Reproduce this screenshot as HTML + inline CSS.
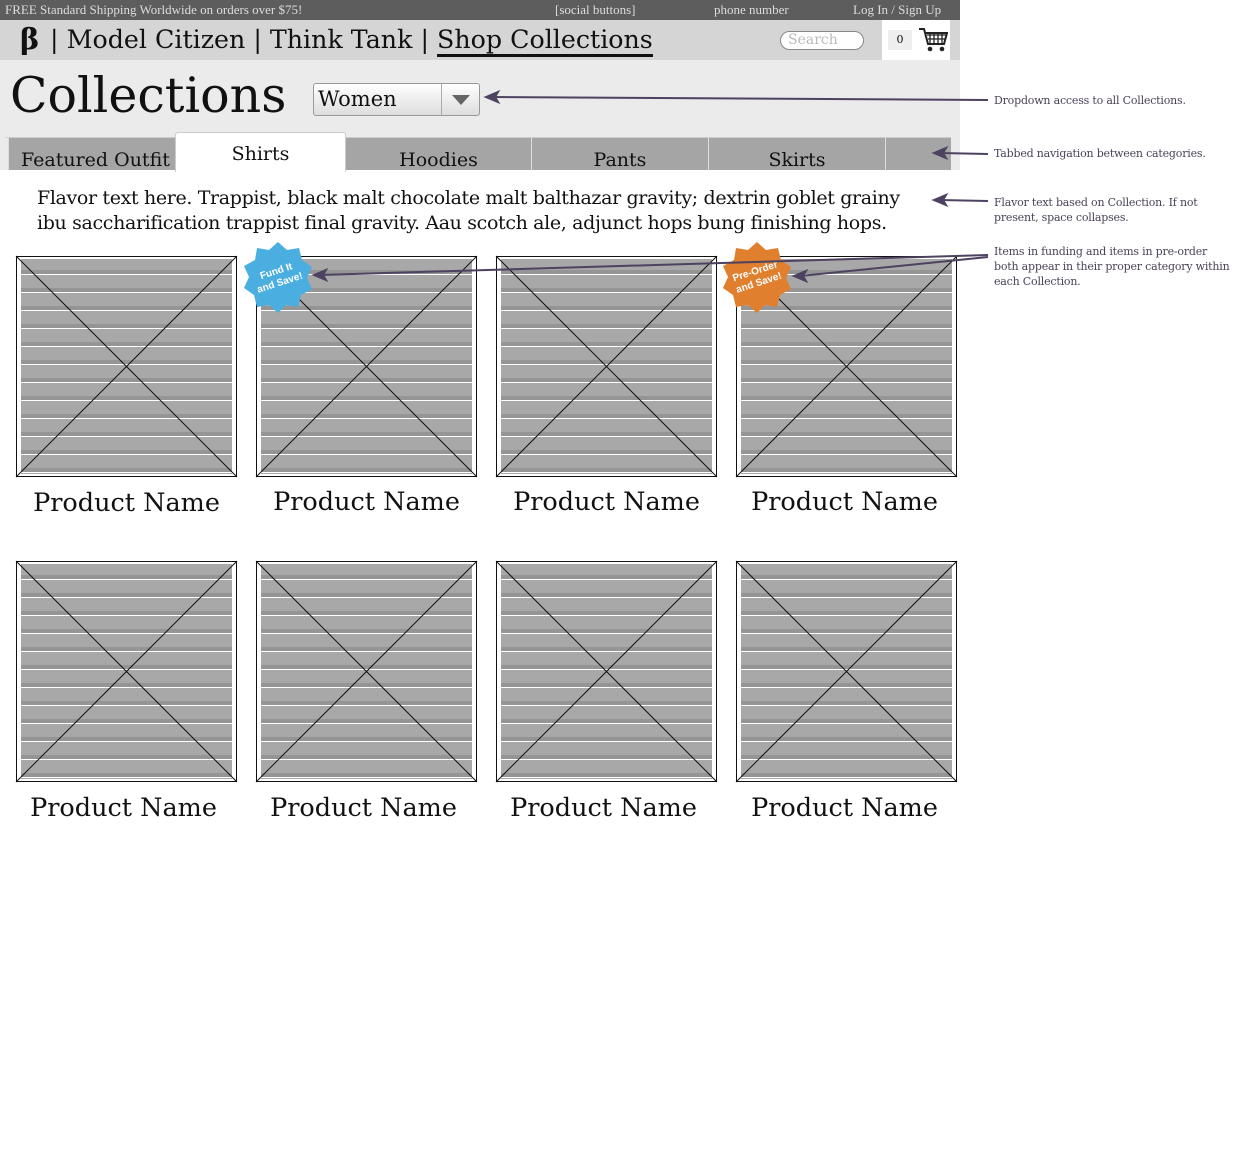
<!DOCTYPE html>
<html><head><style>
*{margin:0;padding:0;box-sizing:border-box}
body{width:1260px;height:1172px;background:#fff;position:relative;font-family:"DejaVu Serif","Liberation Serif",serif;color:#111;overflow:hidden}
.a{position:absolute}
.top{left:0;top:0;width:960px;height:20px;background:#5d5d5d;color:#ddd;font-size:13px;line-height:20px;font-family:"Liberation Serif",serif}
.nav{left:0;top:20px;width:960px;height:40px;background:#d5d5d5}
.hdr{left:0;top:60px;width:960px;height:110px;background:#ebebeb}
.tab{top:138px;height:32px;background:#a5a5a5;border-left:1px solid #ddd;font-size:19px;text-align:center;line-height:44px;overflow:hidden}
.img{width:221px;height:221px;border:1px solid #111;background:
repeating-linear-gradient(180deg,#a8a8a8 0 13px,#959595 13px 17px,#fff 17px 18px);background-clip:content-box;padding:2px 4px}
.pn{font-size:25.5px;width:221px;text-align:center;white-space:nowrap}
.note{font-size:11px;color:#4a4257;line-height:15px;font-family:"DejaVu Serif",serif;letter-spacing:-0.2px}
</style></head><body>
<div class="a top"><span style="margin-left:5px">FREE Standard Shipping Worldwide on orders over $75!</span><span class="a" style="left:555px">[social buttons]</span><span class="a" style="left:714px">phone number</span><span class="a" style="left:853px">Log In / Sign Up</span></div>
<div class="a nav">
<div class="a" style="left:20px;top:0;font-size:29px;line-height:38px;font-weight:bold">β</div>
<div class="a" style="left:50px;top:1px;font-size:25.3px;line-height:38px;white-space:nowrap">| Model Citizen | Think Tank | <span style="border-bottom:3px solid #111">Shop Collections</span></div>
<div class="a" style="left:780px;top:11px;width:84px;height:19px;border:1px solid #888;border-radius:10px;background:#fff;color:#bbb;font-size:14px;line-height:17px;padding-left:7px">Search</div>
<div class="a" style="left:882px;top:0;width:68px;height:40px;background:#fff"></div>
<div class="a" style="left:888px;top:10px;width:24px;height:20px;background:#eee;font-size:11px;text-align:center;line-height:20px">0</div>
<svg class="a" style="left:918px;top:6px" width="30" height="28" viewBox="0 0 30 28"><path d="M1 3h5l4 15h16l3-11H8" fill="none" stroke="#222" stroke-width="2"/><path d="M9 9h19M10 13h17M12 7v11M16 7v11M20 7v11M24 7v11" stroke="#222" stroke-width="1.3"/><circle cx="12" cy="23" r="2.3" fill="#222"/><circle cx="24" cy="23" r="2.3" fill="#222"/></svg>
</div>
<div class="a hdr"></div>
<div class="a" style="left:10px;top:64px;font-size:49px;line-height:64px">Collections</div>
<div class="a" style="left:313px;top:83px;width:167px;height:33px;border:1px solid #999;border-radius:3px;background:linear-gradient(#fff,#ddd);font-size:21px;line-height:31px;padding-left:4px">Women</div>
<div class="a" style="left:441px;top:84px;width:1px;height:31px;background:#aaa"></div>
<div class="a" style="left:452px;top:95px;border-left:9px solid transparent;border-right:9px solid transparent;border-top:10px solid #666"></div>
<div class="a" style="left:6px;top:137px;width:945px;height:1px;background:#ccc"></div>
<div class="a tab" style="left:8px;width:168px;text-align:left;padding-left:12px">Featured Outfit</div>
<div class="a tab" style="left:345px;width:186px">Hoodies</div>
<div class="a tab" style="left:531px;width:177px">Pants</div>
<div class="a tab" style="left:708px;width:177px">Skirts</div>
<div class="a tab" style="left:885px;width:66px"></div>
<div class="a" style="left:175px;top:132px;width:171px;height:40px;background:#fff;border:1px solid #ccc;border-bottom:none;border-radius:3px 3px 0 0;font-size:19px;text-align:center;line-height:42px">Shirts</div>
<div class="a" style="left:37px;top:186px;font-size:19px;line-height:25px;white-space:nowrap;letter-spacing:-0.35px">Flavor text here. Trappist, black malt chocolate malt balthazar gravity; dextrin goblet grainy<br>ibu saccharification trappist final gravity. Aau scotch ale, adjunct hops bung finishing hops.</div>

<div class="a img" style="left:16px;top:256px"></div><div class="a img" style="left:256px;top:256px"></div><div class="a img" style="left:496px;top:256px"></div><div class="a img" style="left:736px;top:256px"></div>
<div class="a img" style="left:16px;top:561px"></div><div class="a img" style="left:256px;top:561px"></div><div class="a img" style="left:496px;top:561px"></div><div class="a img" style="left:736px;top:561px"></div>
<svg class="a" style="left:0;top:0" width="1260" height="1172">
<g stroke="#111" stroke-width="1">
<path d="M16 256L237 477M237 256L16 477M256 256L477 477M477 256L256 477M496 256L717 477M717 256L496 477M736 256L957 477M957 256L736 477"/>
<path d="M16 561L237 782M237 561L16 782M256 561L477 782M477 561L256 782M496 561L717 782M717 561L496 782M736 561L957 782M957 561L736 782"/>
</g>
<g transform="translate(278,277)"><polygon fill="#4aaee0" points="0,-35 9,-27 21,-29 24,-17 34,-10 29,1 34,12 23,18 20,30 8,28 0,36 -9,28 -21,30 -24,18 -34,11 -29,0 -34,-11 -23,-17 -21,-29 -9,-27"/><text transform="rotate(-18)" fill="#fff" font-size="10" font-weight="bold" text-anchor="middle" font-family="Liberation Sans,sans-serif" y="-3">Fund It</text><text transform="rotate(-18)" fill="#fff" font-size="10" font-weight="bold" text-anchor="middle" font-family="Liberation Sans,sans-serif" y="9">and Save!</text></g>
<g transform="translate(757,277)"><polygon fill="#e07f2e" points="0,-35 9,-27 21,-29 24,-17 34,-10 29,1 34,12 23,18 20,30 8,28 0,36 -9,28 -21,30 -24,18 -34,11 -29,0 -34,-11 -23,-17 -21,-29 -9,-27"/><text transform="rotate(-18)" fill="#fff" font-size="10" font-weight="bold" text-anchor="middle" font-family="Liberation Sans,sans-serif" y="-3">Pre-Order</text><text transform="rotate(-18)" fill="#fff" font-size="10" font-weight="bold" text-anchor="middle" font-family="Liberation Sans,sans-serif" y="9">and Save!</text></g>
<g stroke="#4d4260" stroke-width="2" fill="#4d4260">
<path d="M988 100L490 97" /><path d="M486 97l12-5-3 5 3 5z"/>
<path d="M988 154L940 153"/><path d="M934 153l12-5-3 5 3 5z"/>
<path d="M988 201L940 200"/><path d="M934 200l12-5-3 5 3 5z"/>
<path d="M988 255L320 275"/><path d="M314 275l12-5-3 5 3 5z"/>
<path d="M988 257L800 276"/><path d="M794 276l12-5-3 5 3 5z"/>
</g>
</svg>
<div class="a pn" style="left:16px;top:488px">Product Name</div><div class="a pn" style="left:256px;top:487px">Product Name</div><div class="a pn" style="left:496px;top:487px">Product Name</div><div class="a pn" style="left:734px;top:487px">Product Name</div>
<div class="a pn" style="left:13px;top:793px">Product Name</div><div class="a pn" style="left:253px;top:793px">Product Name</div><div class="a pn" style="left:493px;top:793px">Product Name</div><div class="a pn" style="left:734px;top:793px">Product Name</div>
<div class="a note" style="left:994px;top:93px;white-space:nowrap">Dropdown access to all Collections.</div>
<div class="a note" style="left:994px;top:146px;white-space:nowrap">Tabbed navigation between categories.</div>
<div class="a note" style="left:994px;top:195px;white-space:nowrap">Flavor text based on Collection. If not<br>present, space collapses.</div>
<div class="a note" style="left:994px;top:244px;white-space:nowrap">Items in funding and items in pre-order<br>both appear in their proper category within<br>each Collection.</div>
</body></html>
